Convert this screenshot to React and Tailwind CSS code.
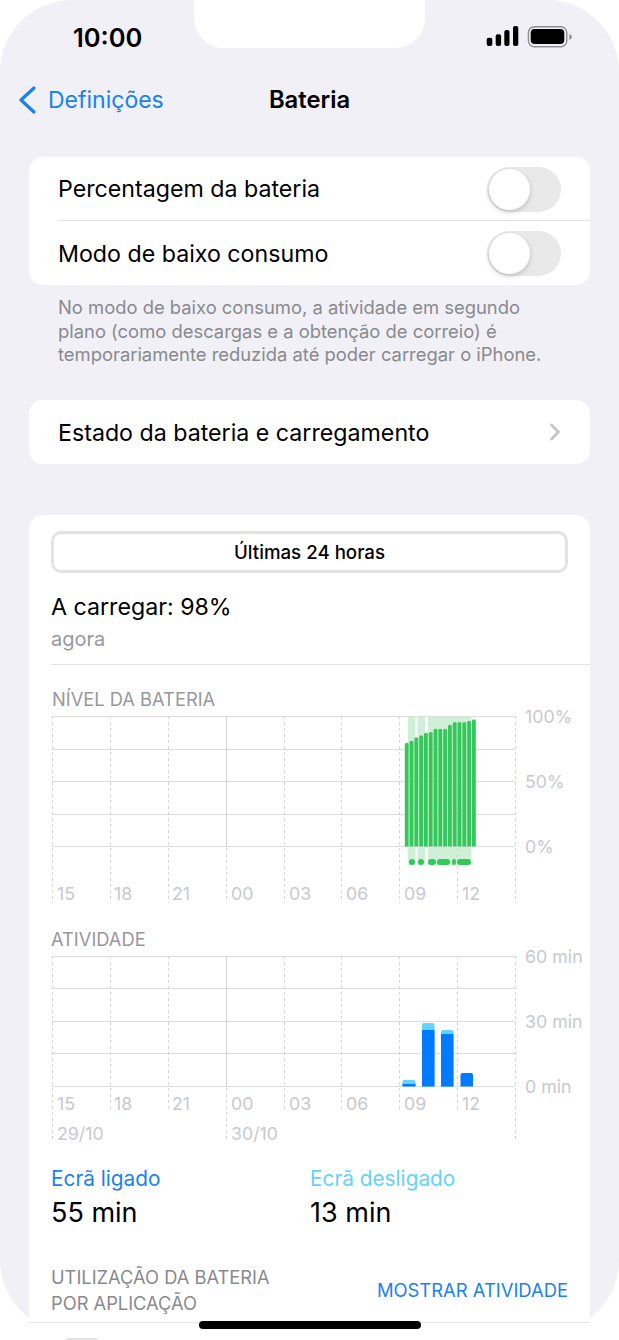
import React from "react";
import { ChevronRight } from "lucide-react";

const FONT = "font-['Inter','Noto_Sans',sans-serif]";

const Toggle = () => (
  <div className="relative w-[74px] h-[45px] rounded-full bg-[#e9e9ea]">
    <div className="absolute left-[2px] top-[2px] w-[41px] h-[41px] rounded-full bg-white shadow-[0_2px_5px_rgba(0,0,0,0.2)]" />
  </div>
);

const VLINES = [52, 110, 168, 226, 284, 341, 399, 457, 515];
const LABELS = [
  [57, "15"],
  [114, "18"],
  [172, "21"],
  [231, "00"],
  [289, "03"],
  [346, "06"],
  [404, "09"],
  [462, "12"],
];

const GREEN_TOPS = [742.7, 740.7, 737.3, 735.3, 732.7, 732, 728.7, 728.7, 728.7, 724.7, 722, 722, 722, 720.7, 719.3];
const GREEN_BANDS = [
  [408, 7.5],
  [417.5, 7.5],
  [428, 43.5],
];
const GREEN_DOTS = [
  [409, 6],
  [418, 6],
  [428, 8],
  [437, 13],
  [452, 4],
  [457, 14],
];

const Grid = ({ lines, vBottom }) => (
  <>
    {lines.map((y) => (
      <line key={y} x1="52" x2="515" y1={y + 0.5} y2={y + 0.5} stroke="#dcdcdf" strokeWidth="1" />
    ))}
    {VLINES.map((x, i) => (
      <line
        key={x}
        x1={x + 0.5}
        x2={x + 0.5}
        y1={lines[0]}
        y2={vBottom(i)}
        stroke="#d4d4d7"
        strokeWidth="1"
        strokeDasharray="3 3"
      />
    ))}
    {/* midnight line is solid inside the plot */}
    <line x1="226.5" x2="226.5" y1={lines[0]} y2={lines[4]} stroke="#d4d4d7" strokeWidth="1" />
  </>
);

const ChartText = ({ x, y, children, color = "#c9c9cd" }) => (
  <text x={x} y={y} fill={color} fontSize="17.8" fontFamily="Inter, sans-serif">
    {children}
  </text>
);

// charts are drawn in page coordinates, the viewBox offset keeps the numbers readable
const BatteryChart = () => (
  <svg className="block overflow-visible mt-[1px]" width="561" height="204" viewBox="29 710 561 204">
    {GREEN_BANDS.map(([x, w]) => (
      <rect key={x} x={x} y="716" width={w} height="149" fill="#cdf0d6" />
    ))}
    <Grid lines={[716, 749, 781, 814, 846]} vBottom={() => 903} />
    {GREEN_TOPS.map((top, i) => (
      <path
        key={i}
        d={`M${404.8 + i * 4.8} 846.5 V${top + 1.5} q0 -1.5 1.9 -1.5 q1.9 0 1.9 1.5 V846.5 Z`}
        fill="#34c759"
      />
    ))}
    {GREEN_DOTS.map(([x, w]) => (
      <rect key={x} x={x} y="859" width={w} height="6" rx="3" fill="#34c759" />
    ))}
    <ChartText x="525" y="723">100%</ChartText>
    <ChartText x="525" y="788">50%</ChartText>
    <ChartText x="525" y="853">0%</ChartText>
    {LABELS.map(([x, t]) => (
      <ChartText key={t} x={x} y="900">{t}</ChartText>
    ))}
  </svg>
);

const ActivityChart = () => (
  <svg className="block overflow-visible mt-[1px]" width="561" height="196" viewBox="29 950 561 196">
    <Grid
      lines={[956, 988, 1021, 1053, 1086]}
      vBottom={(i) => (i === 0 || i === 3 || i === 8 ? 1142 : 1112)}
    />
    <path d="M402.5 1086 V1082 q0 -2 2 -2 h9 q2 0 2 2 V1086 Z" fill="#64d2ff" />
    <rect x="402.5" y="1084" width="13" height="2.5" fill="#007aff" />
    <path d="M422 1086.5 V1025 q0 -2 2 -2 h8.5 q2 0 2 2 V1086.5 Z" fill="#64d2ff" />
    <rect x="422" y="1030" width="12.5" height="56.5" fill="#007aff" />
    <path d="M441 1086.5 V1032 q0 -2 2 -2 h8.5 q2 0 2 2 V1086.5 Z" fill="#64d2ff" />
    <rect x="441" y="1034" width="12.5" height="52.5" fill="#007aff" />
    <path d="M460.5 1086.5 V1075 q0 -2 2 -2 h8.5 q2 0 2 2 V1086.5 Z" fill="#007aff" />
    <ChartText x="525" y="963">60 min</ChartText>
    <ChartText x="525" y="1028">30 min</ChartText>
    <ChartText x="525" y="1093">0 min</ChartText>
    {LABELS.map(([x, t]) => (
      <ChartText key={t} x={x} y="1110">{t}</ChartText>
    ))}
    <ChartText x="57" y="1140">29/10</ChartText>
    <ChartText x="231" y="1140">30/10</ChartText>
  </svg>
);

const StatusIcons = () => (
  <svg width="88" height="24" viewBox="0 0 88 24">
    <rect x="0.7" y="12.7" width="5.6" height="8.3" rx="2" fill="#000" />
    <rect x="9.7" y="9.3" width="5.4" height="11.7" rx="2" fill="#000" />
    <rect x="18.3" y="5" width="5.2" height="16" rx="2" fill="#000" />
    <rect x="27" y="1" width="5.3" height="20" rx="2" fill="#000" />
    <rect x="42.4" y="1.7" width="38.4" height="20" rx="6" fill="none" stroke="#8e8e93" strokeWidth="1.4" />
    <rect x="44.7" y="4" width="33.6" height="15" rx="4" fill="#000" />
    <path d="M83.3 9 q2.7 1 2.7 2.8 q0 1.8 -2.7 3.2 Z" fill="#8e8e93" />
  </svg>
);

export default function App() {
  return (
    <div className={`relative w-[619px] h-[1340px] overflow-hidden bg-white ${FONT}`}>
      <div className="relative h-[1332px] bg-[#f0f0f6] rounded-[72px] overflow-hidden">
        {/* notch */}
        <div className="absolute left-[194px] top-0 w-[231px] h-[48px] bg-white rounded-b-[30px]" />

        <div className="flex items-center justify-between h-[74px] pl-[73px] pr-[45px]">
          <span className="text-[25.5px] font-semibold text-black mt-[3px]">10:00</span>
          <StatusIcons />
        </div>

        <div className="relative flex items-center justify-center h-[52px]">
          <div className="absolute left-[18px] top-0 h-full flex items-center text-[#1a82ee]">
            <svg width="18" height="28" viewBox="0 0 18 28" fill="none">
              <path d="M16 2 L3 14 L16 26" stroke="currentColor" strokeWidth="3.2" strokeLinecap="round" strokeLinejoin="round" />
            </svg>
            <span className="text-[23px] ml-[12px]">Definições</span>
          </div>
          <span className="text-[23.8px] font-semibold text-black">Bateria</span>
        </div>

        <div className="mx-[29px] mt-[31px] rounded-[14px] bg-white">
          <div className="flex items-center justify-between h-[63px] pt-[2px] px-[29px]">
            <span className="text-[23.2px] text-black">Percentagem da bateria</span>
            <Toggle />
          </div>
          <div className="ml-[29px] h-px bg-[#e0e0e3]" />
          <div className="flex items-center justify-between h-[64px] px-[29px]">
            <span className="text-[23.2px] text-black mt-[2px]">Modo de baixo consumo</span>
            <Toggle />
          </div>
        </div>

        <p className="ml-[58px] w-[490px] mt-[11px] text-[18.4px] leading-[23.5px] text-[#8a8a8e]">
          No modo de baixo consumo, a atividade em segundo plano (como descargas e a obtenção de correio) é temporariamente reduzida até poder carregar o iPhone.
        </p>

        <div className="mx-[29px] mt-[33.5px] h-[64px] rounded-[14px] bg-white flex items-center justify-between pl-[29px] pr-[21px]">
          <span className="text-[23.2px] text-black mt-[2px]">Estado da bateria e carregamento</span>
          <ChevronRight size={28} strokeWidth={2.3} className="text-[#c4c4c7]" />
        </div>

        <div className="mx-[29px] mt-[51px] h-[807px] rounded-t-[14px] bg-white">
          <div className="pt-[16px] px-[22px]">
            <div className="flex items-center justify-center h-[42px] pt-[2px] rounded-[10px] border-[3px] border-[#e3e3e6] text-[18.7px] font-medium text-black">
              Últimas 24 horas
            </div>
          </div>
          <div className="pl-[22px] mt-[20px] text-[23.2px] leading-[28px] text-black">A carregar: 98%</div>
          <div className="pl-[22px] mt-[5px] text-[20px] leading-[26px] text-[#98989c]">agora</div>
          <div className="ml-[22px] mt-[12px] h-px bg-[#e2e2e5]" />
          <div className="pl-[23px] mt-[24px] text-[18.3px] leading-[20px] text-[#98989c]">NÍVEL DA BATERIA</div>
          <BatteryChart />
          <div className="pl-[22px] mt-[15px] text-[18.3px] leading-[20px] text-[#98989c]">ATIVIDADE</div>
          <ActivityChart />
          <div className="flex pl-[22px] mt-[20px]">
            <div className="w-[259px]">
              <div className="text-[20.8px] leading-[26px] text-[#1a82ee]">Ecrã ligado</div>
              <div className="text-[27px] leading-[34px] mt-[4px] text-black">55 min</div>
            </div>
            <div>
              <div className="text-[20.8px] leading-[26px] text-[#64d2ff]">Ecrã desligado</div>
              <div className="text-[27px] leading-[34px] mt-[4px] text-black">13 min</div>
            </div>
          </div>
          <div className="flex items-center justify-between px-[22px] mt-[34px]">
            <div className="text-[18.3px] leading-[26px] text-[#8a8a8e]">
              UTILIZAÇÃO DA BATERIA
              <br />
              POR APLICAÇÃO
            </div>
            <div className="text-[18.4px] text-[#1a82ee] mt-[1px]">MOSTRAR ATIVIDADE</div>
          </div>
        </div>
      </div>
      {/* below the screen edge */}
      <div className="absolute left-0 top-[1322px] w-full h-[18px] bg-white" />
      <div className="absolute left-[29px] top-[1322px] w-[561px] h-px bg-[#e4e4e7]" />
      <div className="absolute left-[199px] top-[1321px] w-[222px] h-[8px] rounded-full bg-black" />
      <div className="absolute left-[66px] top-[1338px] w-[32px] h-[2px] rounded-t-full bg-[#e4e4e7]" />
    </div>
  );
}
